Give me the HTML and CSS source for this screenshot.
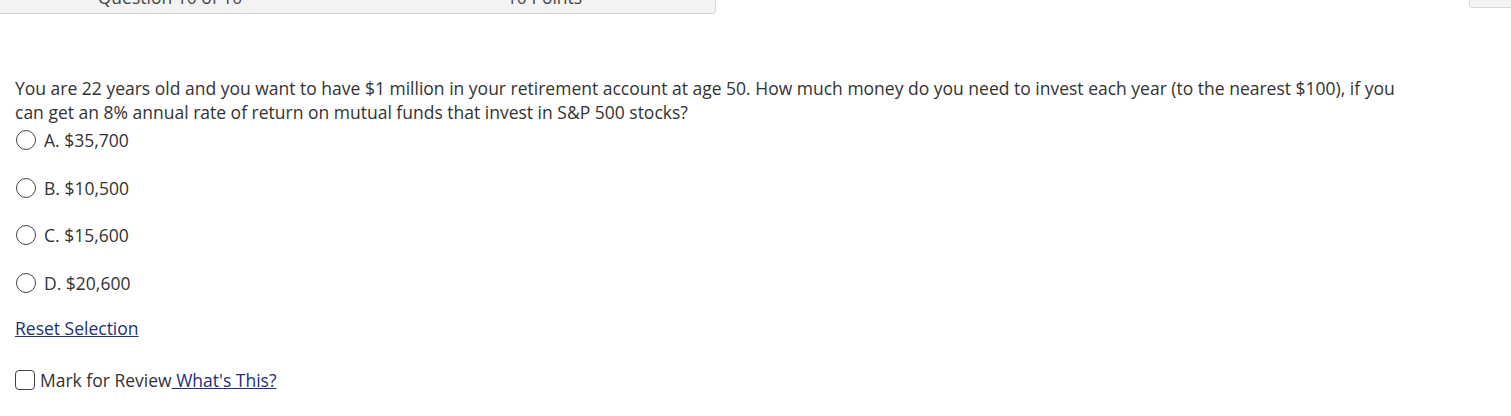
FILE: index.html
```html
<!DOCTYPE html>
<html>
<head>
<meta charset="utf-8">
<link rel="stylesheet" href="styles.css">
</head>
<body>
<div class="topbar">
  <div class="qheader">
    <span class="qnum">Question 10 of 10</span>
    <span class="qpts">10 Points</span>
  </div>
  <div class="sidebox"></div>
</div>
<div class="content">
  <p class="question">You are 22 years old and you want to have $1 million in your retirement account at age 50. How much money do you need to invest each year (to the nearest $100), if you can get an 8% annual rate of return on mutual funds that invest in S&amp;P 500 stocks?</p>
  <ul class="options">
    <li class="option"><span class="radio"></span><span class="label">A. $35,700</span></li>
    <li class="option"><span class="radio"></span><span class="label">B. $10,500</span></li>
    <li class="option"><span class="radio"></span><span class="label">C. $15,600</span></li>
    <li class="option"><span class="radio"></span><span class="label">D. $20,600</span></li>
  </ul>
  <a class="reset" href="#">Reset Selection</a>
  <div class="review">
    <span class="checkbox"></span><span class="rlabel">Mark for Review</span><a class="whats" href="#">&nbsp;What's This?</a>
  </div>
</div>
</body>
</html>
```
FILE: styles.css
```css
html, body {
  margin: 0;
  padding: 0;
  background: #ffffff;
}
body {
  font-family: "Open Sans", "Liberation Sans", sans-serif;
  color: #333333;
  width: 1511px;
  height: 416px;
  overflow: hidden;
}
.topbar {
  display: flex;
  justify-content: space-between;
  align-items: flex-start;
  margin-top: -27px;
}
.qheader {
  width: 716px;
  height: 41px;
  box-sizing: border-box;
  background: #f3f3f3;
  border: 1px solid #d6d6d6;
  border-left: none;
  border-radius: 0 0 4px 0;
  display: flex;
  align-items: flex-start;
  padding-top: 11px;
  font-size: 17.5px;
  line-height: 24px;
  color: #444444;
}
.qnum {
  flex: 0 0 340px;
  text-align: center;
}
.qpts {
  flex: 1 1 auto;
  padding-left: 34px;
  text-align: center;
}
.sidebox {
  width: 42px;
  height: 35px;
  box-sizing: border-box;
  background: #f3f3f3;
  border: 1px solid #d6d6d6;
  border-right: none;
  border-radius: 0 0 0 4px;
}
.content {
  padding: 0 15px;
}
.question {
  max-width: 1400px;
  margin: 62px 0 0 0;
  font-size: 17.5px;
  line-height: 24px;
  color: #333333;
}
.options {
  list-style: none;
  margin: 4px 0 0 0;
  padding: 0;
  display: flex;
  flex-direction: column;
  gap: 23.6px;
}
.option {
  display: flex;
  align-items: center;
  height: 24px;
  font-size: 17.5px;
  color: #333333;
}
.radio {
  width: 20px;
  height: 20px;
  box-sizing: border-box;
  border: 1.3px solid #444444;
  border-radius: 50%;
  margin-left: 1px;
  margin-right: 8px;
}
.reset {
  display: inline-block;
  margin-top: 21px;
  font-size: 17.5px;
  line-height: 24px;
  color: #23307a;
  text-decoration: underline;
}
.review {
  display: flex;
  align-items: center;
  margin-top: 28px;
  font-size: 17.5px;
  line-height: 24px;
}
.checkbox {
  width: 20px;
  height: 20px;
  box-sizing: border-box;
  border: 1.5px solid #444444;
  border-radius: 4px;
  margin-right: 5px;
}
.rlabel {
  color: #333333;
}
.whats {
  color: #23307a;
  text-decoration: underline;
}
```
